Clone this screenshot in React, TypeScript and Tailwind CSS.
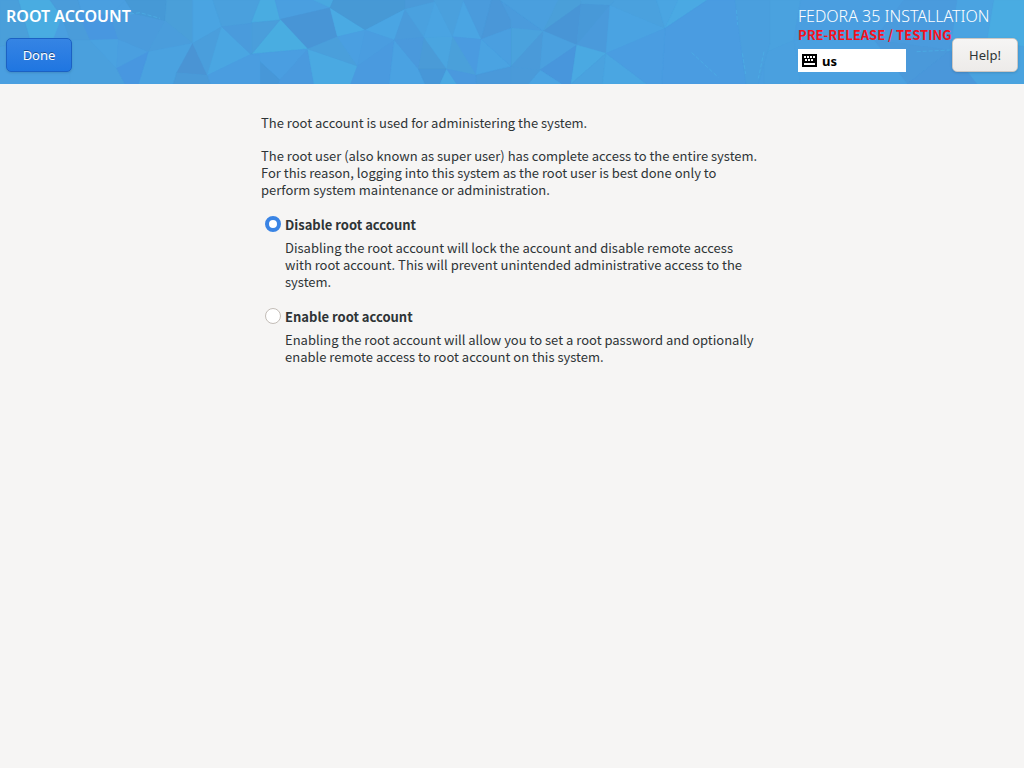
import { useState } from "react";

type Facet = [string, string];

// Each facet is a fill colour and its corner points.
const leftFacets: Facet[] = [
  ["#49ace1", "55,0 90,120 160,115 185,50 150,0"],
  ["#4a9fda", "0,0 55,0 90,120 0,140"],
  ["#4a9cda", "150,0 235,0 270,120 210,120 185,50"],
  ["#4a9fe0", "235,0 375,0 330,50 245,40"],
  ["#4897e0", "235,40 270,120 355,118 330,45"],
  ["#4aa0dd", "210,120 270,120 350,205 375,252 210,252"],
  ["#4aa2e0", "270,120 355,118 350,205"],
  ["#4a9fe0", "355,118 445,155 350,205"],
  ["#4a9bdc", "330,45 400,40 495,62 445,155 355,118"],
  ["#4699d6", "375,0 500,0 495,62 400,40"],
  ["#4a9fd9", "500,0 578,0 578,130 495,62"],
  ["#4a9ddc", "495,62 445,155 578,130"],
  ["#4aa2e0", "445,155 415,252 520,252 530,218 578,130"],
  ["#4a94d4", "578,130 530,218 622,226"],
  ["#4aa4e2", "578,0 578,130 665,80 638,0"],
  ["#4a9edc", "578,130 665,80 622,226"],
  ["#4aa6e2", "665,80 752,163 622,226"],
  ["#4aa0dd", "638,0 780,0 752,70 665,80"],
  ["#4a9bdc", "665,80 752,70 752,163"],
  ["#4897e0", "350,205 445,155 415,252 375,252"],
  ["#4a9de0", "622,226 752,163 780,165 780,252 630,252"],
  ["#4a9ad8", "530,218 622,226 630,252 520,252"],
];

const middleFacets: Facet[] = [
  ["#49ace1", "25,0 75,0 90,60 5,68"],
  ["#4a9fe0", "75,0 200,0 240,23 90,58"],
  ["#49a8e0", "190,0 250,0 240,23"],
  ["#4895d6", "90,58 240,23 262,110 173,147"],
  ["#49ade1", "90,58 173,147 5,162"],
  ["#4a9edb", "5,68 90,60 5,162"],
  ["#4a9ee1", "5,162 173,147 90,240"],
  ["#4797d8", "5,162 90,240 85,252 25,252"],
  ["#4a9ade", "173,147 192,252 85,252 90,240"],
  ["#4aa9e2", "173,147 322,198 302,252 192,252"],
  ["#4aaae3", "240,23 346,90 262,110"],
  ["#4799d5", "240,23 346,90 465,28 465,0 250,0"],
  ["#4aa5e3", "346,90 465,28 433,120"],
  ["#4a9fdb", "262,110 173,147 322,198"],
  ["#4a9fe1", "262,110 346,90 322,198"],
  ["#4a9de0", "346,90 433,120 322,198"],
  ["#4a9adf", "433,120 322,198 302,252 418,252"],
  ["#4aa2e2", "433,120 505,207 525,252 418,252"],
  ["#4a9ad9", "465,0 550,0 555,5 465,28"],
  ["#4a9bdb", "465,28 433,120 522,112"],
  ["#4aa1df", "465,28 555,5 522,112"],
  ["#4a99dc", "433,120 522,112 505,207"],
  ["#4a9bd7", "522,112 590,207 505,207"],
  ["#4aa5e0", "522,112 608,110 590,207"],
  ["#4aa4e2", "555,5 608,110 522,112"],
  ["#4aa0dd", "550,0 640,0 608,110 555,5"],
  ["#4aa5e3", "640,5 694,118 608,110"],
  ["#4a9be0", "608,110 694,118 678,225"],
  ["#4aa0da", "608,110 678,225 590,207"],
  ["#4797d8", "505,207 590,207 570,252 525,252"],
  ["#4aa8e2", "590,207 620,252 570,252"],
  ["#4a99de", "590,207 678,225 680,252 620,252"],
  ["#4a9bdc", "640,0 725,0 694,118"],
  ["#4a97d8", "725,0 750,0 782,60 782,85 694,118"],
  ["#4aa3e2", "694,118 782,198 678,225"],
  ["#4a9fe0", "694,118 782,85 782,198"],
  ["#4a99da", "678,225 782,200 782,252 680,252"],
];

const rightFacets: Facet[] = [
  ["#4a9bdc", "0,0 130,93 32,84"],
  ["#4a9fde", "0,0 180,0 130,93"],
  ["#4a9fd9", "175,0 245,0 243,12 130,93"],
  ["#4aa0dc", "245,0 345,0 330,16 243,12"],
  ["#4895d6", "130,93 243,12 230,135"],
  ["#4899d8", "243,12 330,16 230,135"],
  ["#4a9adb", "330,16 318,160 230,135"],
  ["#4aa2dd", "32,84 130,93 32,200"],
  ["#4a9be0", "0,95 32,84 32,200 0,170"],
  ["#4aa6e2", "0,170 32,200 0,208"],
  ["#4a9ad9", "130,93 120,210 32,200"],
  ["#4aa0df", "130,93 230,135 120,210"],
  ["#4896dc", "120,210 185,252 213,252 230,135"],
  ["#4aa9e2", "230,135 318,160 213,252"],
  ["#4aa2df", "318,160 308,252 213,252"],
  ["#4aa6e2", "318,160 440,252 308,252"],
  ["#4aa3e2", "330,16 495,85 318,160"],
  ["#4aa1de", "330,16 345,0 470,0 495,85"],
  ["#4aa5e2", "470,0 535,0 495,85"],
  ["#4aa9e3", "535,0 622,0 495,85"],
  ["#4a9ce1", "495,85 622,0 705,0 738,252 485,252"],
  ["#4a9de1", "495,85 485,252 440,252 318,160"],
  ["#4a9fde", "705,0 810,0 810,130 775,252 738,252"],
  ["#4aa3e2", "120,210 185,252 85,252"],
  ["#4a9ad9", "32,200 120,210 85,252 0,252"],
];

const endFacets: Facet[] = [
  ["#4aa2df", "0,0 110,0 90,120 0,160"],
  ["#4aa0df", "0,160 90,120 110,252 0,252"],
  ["#4a9ee0", "110,0 420,0 330,120 90,120"],
  ["#4a9bdd", "420,0 580,0 560,150 330,120"],
  ["#4a99da", "330,120 560,150 430,252"],
  ["#4aa0e0", "90,120 330,120 430,252 110,252"],
  ["#4a97da", "560,150 640,252 430,252"],
  ["#4aa3e1", "580,0 690,0 670,120 560,150"],
  ["#49ace2", "690,0 780,0 780,140 670,120"],
  ["#4aa3df", "560,150 670,120 780,140 780,252 640,252"],
];

function Facets({ items }: { items: Facet[] }) {
  return (
    <>
      {items.map(([fill, points], i) => (
        <polygon key={i} points={points} fill={fill} stroke={fill} strokeWidth="1" />
      ))}
    </>
  );
}

function Backdrop() {
  return (
    <svg
      className="absolute inset-0 h-full w-full"
      viewBox="0 0 3072 252"
      preserveAspectRatio="xMinYMin slice"
      aria-hidden="true"
    >
      <rect width="3072" height="252" fill="#4a9fe0" />
      <g transform="translate(2292 0)"><Facets items={endFacets} /></g>
      <g transform="translate(1500 0)"><Facets items={rightFacets} /></g>
      <g transform="translate(750 0)"><Facets items={middleFacets} /></g>
      <Facets items={leftFacets} />
      <g fill="none" stroke="#4bb0e6" strokeWidth="2" strokeDasharray="12 6">
        <path d="M390 42 420 38 480 55" />
        <path d="M2075 158 2155 232" />
        <path d="M2209 30 2213 75M2227 160 2237 222M2292 155 2275 235" />
        <path d="M2750 155 2850 150" />
      </g>
    </svg>
  );
}

function KeyboardIcon() {
  return (
    <svg width="15" height="13" viewBox="0 0 15 13" shapeRendering="crispEdges" aria-hidden="true">
      <rect width="15" height="13" rx="1" fill="#000" />
      <path
        fill="#fff"
        d="M2 2h2v2H2zM5 2h2v2H5zM8 2h2v2H8zM11 2h2v2h-2zM3 5h2v2H3zM6 5h2v2H6zM9 5h2v2H9zM2 9h11v2H2z"
      />
    </svg>
  );
}

interface OptionProps {
  id: string;
  label: string;
  description: string;
  checked: boolean;
  onSelect: () => void;
}

function Option({ id, label, description, checked, onSelect }: OptionProps) {
  return (
    <div className="grid grid-cols-[16px_1fr] gap-x-1 gap-y-1.5 pl-1">
      <input
        type="radio"
        id={id}
        name="root-account"
        checked={checked}
        onChange={onSelect}
        aria-describedby={`${id}-description`}
        className="size-4 appearance-none rounded-full border border-[#c3bdb7] bg-white checked:border-4 checked:border-[#3a84e4]"
      />
      <label htmlFor={id} className="font-bold">
        {label}
      </label>
      <p id={`${id}-description`} className="col-start-2 pr-2">
        {description}
      </p>
    </div>
  );
}

export default function App() {
  const [enabled, setEnabled] = useState(false);

  return (
    <div className="min-h-screen bg-[#f6f5f4] font-['Noto_Sans_CJK_SC','Noto_Sans',sans-serif] text-[13px] leading-[17px] text-[#2e3436]">
      <header className="relative flex h-21 justify-between overflow-hidden bg-[#4a9fe0] font-['Noto_Sans',sans-serif]">
        <Backdrop />
        <div className="relative flex flex-col items-start gap-3 p-1.5">
          <h1 className="text-[16px] leading-[20px] font-semibold text-white">ROOT ACCOUNT</h1>
          <button
            type="button"
            className="h-[34px] w-[66px] rounded-[5px] border border-[#1b61c4] bg-linear-to-b from-[#3584e4] to-[#1f76e1] text-white shadow-sm [text-shadow:0_-1px_rgba(0,0,0,0.4)]"
          >
            Done
          </button>
        </div>
        <div className="relative flex items-start p-1.5">
          <div className="flex w-[154px] flex-col items-start whitespace-nowrap">
            <p className="text-[16px] leading-[20px] font-light text-white">FEDORA 35 INSTALLATION</p>
            <p className="font-['Noto_Sans_CJK_SC','Noto_Sans',sans-serif] font-bold text-[#f5121d]">
              PRE-RELEASE / TESTING
            </p>
            <div className="mt-1.5 flex h-[23px] w-[108px] items-center gap-[5px] bg-white px-1 font-bold text-black">
              <KeyboardIcon />
              <span className="pt-0.5">us</span>
            </div>
          </div>
          <button
            type="button"
            className="mt-8 h-[34px] w-[66px] rounded-[5px] border border-[#cdc7c2] bg-linear-to-b from-[#f6f5f4] to-[#edebe9] shadow-sm"
          >
            Help!
          </button>
        </div>
      </header>
      <main className="mx-auto max-w-[502px] pt-[30px]">
        <p>The root account is used for administering the system.</p>
        <p className="mt-4">
          The root user (also known as super user) has complete access to the entire system. For this
          reason, logging into this system as the root user is best done only to perform system
          maintenance or administration.
        </p>
        <div role="radiogroup" aria-label="Root account" className="mt-[18px] flex flex-col gap-[18px]">
          <Option
            id="disable-root"
            label="Disable root account"
            description="Disabling the root account will lock the account and disable remote access with root account. This will prevent unintended administrative access to the system."
            checked={!enabled}
            onSelect={() => setEnabled(false)}
          />
          <Option
            id="enable-root"
            label="Enable root account"
            description="Enabling the root account will allow you to set a root password and optionally enable remote access to root account on this system."
            checked={enabled}
            onSelect={() => setEnabled(true)}
          />
        </div>
      </main>
    </div>
  );
}
